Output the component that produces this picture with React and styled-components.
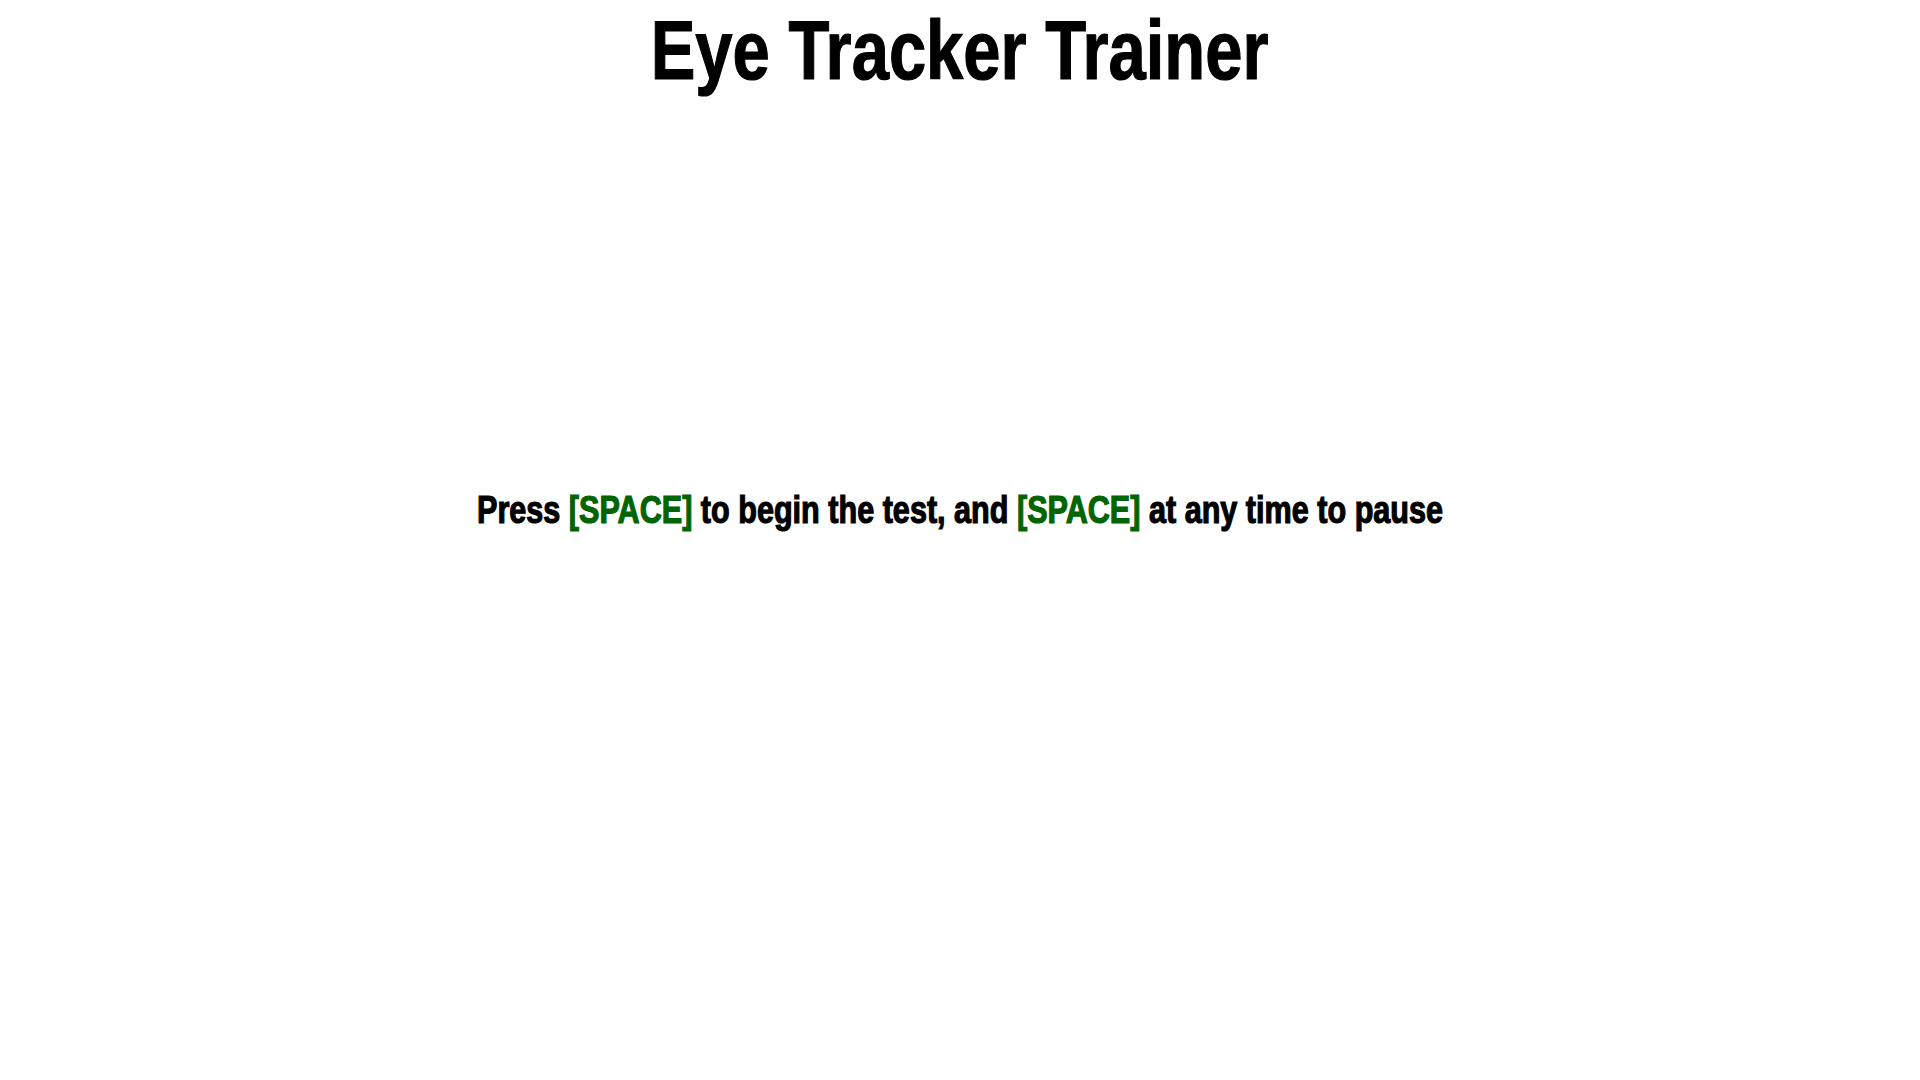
import styled, { createGlobalStyle } from "styled-components";

const Global = createGlobalStyle`
body{
    margin:0;
    background-color:#FFFFFF;
    font-family: "Liberation Sans Narrow", "Liberation Sans", Arial, sans-serif;
}
`

export default function App() {
    return (
        <Page>
            <Global />
            <Title><Squeeze $squeeze={0.797}>Eye Tracker Trainer</Squeeze></Title>
            <Prompt>
                <Squeeze $squeeze={0.805}>
                    Press <Key>[SPACE]</Key> to begin the test, and <Key>[SPACE]</Key> at any time to pause
                </Squeeze>
            </Prompt>
        </Page>
    )
}

const Page = styled.div`
display:flex;
flex-direction:column;
align-items:center;
width:100%;
height:100vh;
overflow:hidden;
`
const Squeeze = styled.span`
display:inline-block;
white-space:nowrap;
transform:scaleX(${p => p.$squeeze});
-webkit-text-stroke: 1.2px #000000;
`
const Title = styled.h1`
margin:0;
padding-top:8px;
font-size:84px;
font-weight:700;
line-height:1;
color:#000000;
`
const Prompt = styled.p`
margin:0;
margin-top:399px;
font-size:38px;
font-weight:700;
line-height:1;
color:#000000;
`
const Key = styled.span`
color:#006400;
-webkit-text-stroke: 1.2px #006400;
`
